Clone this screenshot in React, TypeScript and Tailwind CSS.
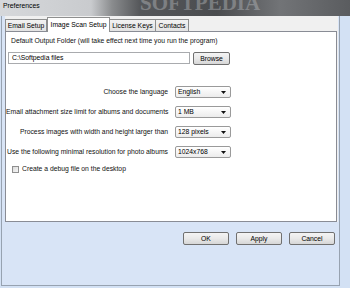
import React from "react";

const font = { fontFamily: '"Liberation Sans", Arial, sans-serif' };

function Select({ value }: { value: string }) {
  return (
    <div className="relative flex h-[12px] w-[56px] items-center rounded-[2px] border border-[#9a9a9a] bg-gradient-to-b from-[#ffffff] to-[#ececec] pl-[2px] text-[6.8px] leading-[8px] text-black">
      <span>{value}</span>
      <svg className="absolute right-[4px] top-[4px]" width="5" height="3" viewBox="0 0 5 3">
        <path d="M0 0 H5 L2.5 3 Z" fill="#111" />
      </svg>
    </div>
  );
}

function Row({ label, value }: { label: string; value: string }) {
  return (
    <div className="flex items-center">
      <div className="w-[162px] whitespace-nowrap text-right text-[6.8px] leading-[8px] text-[#111]">{label}</div>
      <div className="ml-[7px]">
        <Select value={value} />
      </div>
    </div>
  );
}

function Btn({ label, w }: { label: string; w: string }) {
  return (
    <div
      className={`flex h-[13px] ${w} items-center justify-center rounded-[2px] border border-[#707070] bg-gradient-to-b from-[#f4f4f4] via-[#e9e9e9] to-[#d6d6d6] text-[6.8px] leading-[8px] text-black`}
    >
      {label}
    </div>
  );
}

export default function App() {
  return (
    <div className="relative h-[288px] w-[350px] overflow-hidden bg-[#d3e1f4]" style={font}>
      {/* Title bar */}
      <div className="relative h-[16px] w-full overflow-hidden bg-[linear-gradient(90deg,#d6d8db_0%,#c9cbce_26%,#8a8c8e_32%,#55575a_40%,#4a4c4f_62%,#727477_80%,#5a5c5f_100%)]">
        <div className="absolute left-[3px] top-[2px] text-[6.8px] leading-[8px] text-black">Preferences</div>
        <div
          aria-hidden="true"
          className="absolute left-[140px] top-[-7px] text-[21px] font-bold leading-[21px] text-[#bfc2c5] opacity-40"
          style={{ fontFamily: '"Liberation Serif", serif' }}
        >
          SOFTPEDIA
        </div>
      </div>

      <div className="flex h-[272px]">
        {/* Client area */}
        <div className="ml-[1px] flex h-[270px] w-[339px] flex-col border-b border-l border-r border-[#97a2b0] bg-[#d8e4f6]">
          {/* Tab control */}
          <div className="ml-[3px] flex w-[333px] flex-col bg-[#f0f0f0]">
            <div className="relative flex h-[15px] items-end">
              <div className="flex h-[12px] w-[42px] items-center justify-center border border-b-0 border-[#8e8f8f] bg-gradient-to-b from-[#f2f2f2] to-[#e3e3e3] text-[6.8px] leading-[8px] text-black">
                Email Setup
              </div>
              <div className="relative z-10 mb-[-1px] flex h-[15px] w-[63px] items-center justify-center border border-b-0 border-[#8e8f8f] bg-white pb-[1px] text-[6.8px] leading-[8px] text-black">
                Image Scan Setup
              </div>
              <div className="flex h-[12px] w-[46px] items-center justify-center border border-b-0 border-l-0 border-[#8e8f8f] bg-gradient-to-b from-[#f2f2f2] to-[#e3e3e3] text-[6.8px] leading-[8px] text-black">
                License Keys
              </div>
              <div className="flex h-[12px] w-[33px] items-center justify-center border border-b-0 border-l-0 border-[#8e8f8f] bg-gradient-to-b from-[#f2f2f2] to-[#e3e3e3] text-[6.8px] leading-[8px] text-black">
                Contacts
              </div>
            </div>
            {/* Panel */}
            <div className="relative flex h-[191px] w-[332px] flex-col border border-[#898c95] bg-white pt-[5px]">
              <div className="ml-[5px] whitespace-nowrap text-[6.8px] leading-[8px] text-[#111]">
                Default Output Folder (will take effect next time you run the program)
              </div>
              <div className="mt-[7px] flex">
                <div className="ml-[2px] flex h-[12px] w-[182px] items-center border border-[#a9abae] bg-white pl-[3px] text-[6.8px] leading-[8px] text-black">
                  C:\Softpedia files
                </div>
                <div className="ml-[3px]">
                  <Btn label="Browse" w="w-[37px]" />
                </div>
              </div>
              <div className="mt-[21px] flex flex-col gap-[8px]">
                <Row label="Choose the language" value="English" />
                <Row label="Email attachment size limit for albums and documents" value="1 MB" />
                <Row label="Process images with width and height larger than" value="128 pixels" />
                <Row label="Use the following minimal resolution for photo albums" value="1024x768" />
              </div>
              <div className="ml-[6px] mt-[7px] flex items-center">
                <div className="h-[7px] w-[7px] border border-[#8f8f8f] bg-gradient-to-br from-[#dcdcdc] to-[#f6f6f6]" />
                <div className="ml-[3px] text-[6.8px] leading-[8px] text-[#111]">Create a debug file on the desktop</div>
              </div>
            </div>
          </div>
          {/* Buttons */}
          <div className="mt-[10px] flex justify-end gap-[7px] pr-[4px]">
            <Btn label="OK" w="w-[46px]" />
            <Btn label="Apply" w="w-[46px]" />
            <Btn label="Cancel" w="w-[46px]" />
          </div>
        </div>
      </div>
    </div>
  );
}
